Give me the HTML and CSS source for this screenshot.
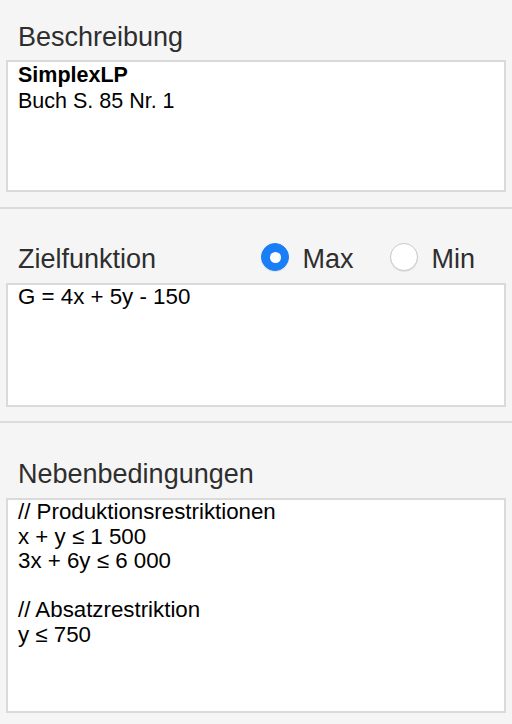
FILE: index.html
```html
<!DOCTYPE html>
<html lang="de">
<head>
    <meta charset="UTF-8">
    <meta name="viewport" content="width=device-width, initial-scale=1.0">
    <title>SimplexLP</title>
    <link rel="stylesheet" href="styles.css">
</head>
<body>
    <div class="section first">
        <p class="label">Beschreibung</p>
        <div class="field desc" contenteditable="true">
            <div><b>SimplexLP</b></div>
            <div>Buch S. 85 Nr. 1</div>
        </div>
    </div>
    <div class="section">
        <div class="head">
            <p class="label">Zielfunktion</p>
            <div class="choice">
                <label class="option"><input type="radio" name="mode" checked><span>Max</span></label>
                <label class="option"><input type="radio" name="mode"><span>Min</span></label>
            </div>
        </div>
        <div class="field goal" contenteditable="true">G = 4x + 5y - 150</div>
    </div>
    <div class="section last">
        <p class="label">Nebenbedingungen</p>
        <div class="field rules" contenteditable="true">// Produktionsrestriktionen
x + y ≤ 1 500
3x + 6y ≤ 6 000

// Absatzrestriktion
y ≤ 750</div>
    </div>
</body>
</html>
```

FILE: styles.css
```css
body{
    margin: 0;
    background: #f5f5f5;
    font-family: "Liberation Sans", Arial, sans-serif;
}

.section{
    padding: 34px 6px 14px;
    border-bottom: 2px solid #dcdcdc;
}
.section.first{
    padding-top: 21px;
    padding-bottom: 15px;
}
.section.last{
    padding-top: 35px;
    border-bottom: none;
}

.label{
    margin: 0 0 8px 12px;
    font-size: 27px;
    line-height: 32px;
    color: #2e2e2e;
}
.first .label{
    margin-bottom: 7px;
}

.head{
    display: flex;
    align-items: center;
    justify-content: space-between;
    margin-bottom: 8px;
}
.head .label{
    margin-bottom: 0;
}

.choice{
    display: flex;
    gap: 37px;
    padding-right: 31px;
}
.option{
    display: flex;
    align-items: center;
    gap: 13px;
    font-size: 27px;
    line-height: 32px;
    color: #2e2e2e;
}
.option input{
    appearance: none;
    margin: 0;
    width: 28px;
    height: 28px;
    border-radius: 50%;
    background: #fff;
    border: 1px solid #c9c9c9;
    box-shadow: 0 1px 1px rgba(0,0,0,0.08);
    position: relative;
    top: -2px;
}
.option input:checked{
    background: #1a7ff7;
    border-color: #1a7ff7;
}
.option input:checked::after{
    content: "";
    position: absolute;
    left: 50%;
    top: 50%;
    width: 11px;
    height: 11px;
    margin: -5.5px 0 0 -5.5px;
    border-radius: 50%;
    background: #fff;
}

.field{
    background: #fff;
    border: 2px solid #dadada;
    padding: 0 10px;
    font-size: 22.3px;
    line-height: 24.6px;
    color: #000;
    white-space: pre-wrap;
    outline: none;
}
.desc{
    height: 128px;
    font-size: 21.5px;
    line-height: 26px;
    white-space: normal;
}
.goal{
    height: 120px;
}
.rules{
    height: 211px;
}
```
